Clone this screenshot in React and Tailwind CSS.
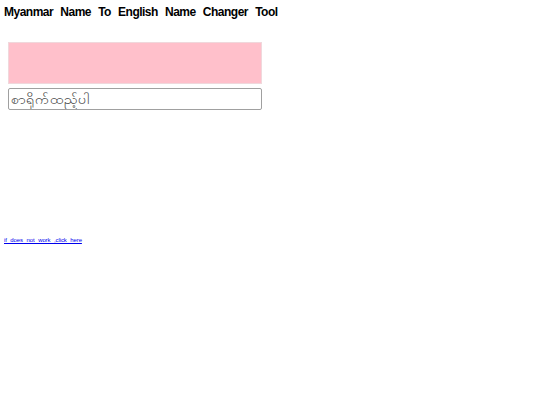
export default function App() {
  return (
    <div className="bg-white w-[540px] h-[405px] font-['Liberation_Sans',sans-serif] text-black">
      <h1 className="text-[12px] font-bold pl-[4px] pt-[5px] leading-[14px] tracking-[-0.5px] [word-spacing:4.3px]">Myanmar Name To English Name Changer Tool</h1>
      <div className="pl-[8px] pt-[23px]">
        <div className="w-[254px] h-[42px] bg-[#ffc0cb] border border-[#f0d8dc]"></div>
        <input
          className="mt-[4px] w-[254px] h-[22px] border border-[#a0a0a0] rounded-[2px] px-[2px] text-[14px] outline-none placeholder:text-[#444]"
          placeholder="စာရိုက်ထည့်ပါ"
        />
      </div>
      <div className="pl-[4px] pt-[122px] leading-[7px]">
        <a href="#" className="text-[6px] text-[#0000ee] underline tracking-[-0.1px] [word-spacing:2px]">if does not work ,click here</a>
      </div>
    </div>
  );
}
